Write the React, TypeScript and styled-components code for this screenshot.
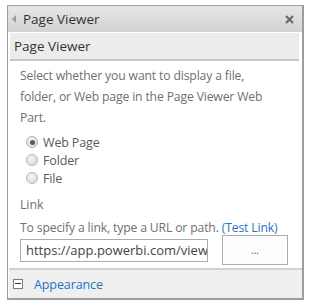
import React from "react";
import styled, { createGlobalStyle } from "styled-components";

const Global = createGlobalStyle`
  html, body { margin: 0; padding: 0; background: #fff; }
  body { font-family: "Open Sans", "Noto Sans", sans-serif; }
`;

const Panel = styled.div`
  margin: 5px 0 0 7px;
  width: 294px;
  height: 292px;
  border: 2px solid #9d9d9d;
  border-top-width: 1px;
  border-left-width: 1px;
  background: #fff;
  display: flex;
  flex-direction: column;
`;

const TitleBar = styled.div`
  height: 26px;
  flex: none;
  display: flex;
  align-items: center;
  padding: 0 8px 0 3px;
  background: linear-gradient(#e6e6e6, #d3d3d3);
  color: #333;
  font-size: 13.5px;
`;

const Arrow = styled.span`
  width: 0;
  height: 0;
  border-top: 4px solid transparent;
  border-bottom: 4px solid transparent;
  border-right: 4px solid #999;
  margin: 0 7px 0 1px;
`;

const Title = styled.span`
  flex: 1;
`;

const Close = styled.svg`
  width: 9px;
  height: 9px;
`;

const Body = styled.div`
  flex: 1;
  display: flex;
  flex-direction: column;
  padding: 1px 3px 0 2px;
`;

const SectionHead = styled.div`
  height: 26px;
  flex: none;
  display: flex;
  align-items: center;
  padding-left: 4px;
  background: #ececec;
  border-bottom: 2px solid #c8c8c8;
  color: #333;
  font-size: 13.5px;
`;

const Content = styled.div`
  flex: 1;
  padding: 4px 0 0 10px;
  color: #707070;
  font-size: 12.2px;
  letter-spacing: -0.15px;
  line-height: 21px;
`;

const Para = styled.p`
  margin: 0;
  width: 262px;
`;

const Radios = styled.div`
  display: flex;
  flex-direction: column;
  padding-left: 6px;
  margin-top: 5px;
`;

const RadioRow = styled.label`
  display: flex;
  align-items: center;
  height: 18px;
  gap: 5px;
  color: #5a5a5a;
  font-size: 12.5px;
`;

const Radio = styled.span<{ $on?: boolean }>`
  width: 10px;
  height: 10px;
  border-radius: 50%;
  border: 1px solid #b4b4b4;
  background: radial-gradient(circle at 40% 35%, #f6f6f6, #d4d4d4);
  display: flex;
  align-items: center;
  justify-content: center;
  &::after {
    content: "";
    display: ${(p) => (p.$on ? "block" : "none")};
    width: 5px;
    height: 5px;
    border-radius: 50%;
    background: #5a5a5a;
  }
`;

const Label = styled.div`
  margin-top: 8px;
  line-height: 20px;
  font-size: 12.5px;
`;

const Hint = styled.div`
  margin-top: 3px;
  line-height: 20px;
`;

const Link = styled.span`
  color: #1f73c4;
`;

const InputRow = styled.div`
  display: flex;
  align-items: center;
  height: 30px;
  margin-top: -3px;
`;

const Input = styled.input`
  box-sizing: content-box;
  width: 181px;
  height: 21px;
  margin: 0;
  border: 1px solid #ababab;
  padding: 0 0 0 5px;
  outline: none;
  color: #444;
  line-height: 21px;
  font-family: "Open Sans", "Noto Sans", sans-serif;
  font-size: 13px;
  letter-spacing: 0;
  background: #fff;
`;

const Button = styled.div`
  margin-left: 14px;
  width: 64px;
  height: 28px;
  border: 1px solid #ababab;
  background: #fdfdfd;
  display: flex;
  align-items: center;
  justify-content: center;
  color: #555;
  font-size: 10px;
  letter-spacing: 0;
`;

const Footer = styled.div`
  height: 28px;
  flex: none;
  margin: 0 -3px 0 -1px;
  border-top: 2px solid #d2d2d2;
  background: #efefef;
  display: flex;
  align-items: center;
  padding-left: 4px;
  font-size: 12.5px;
  letter-spacing: -0.1px;
`;

const Minus = styled.span`
  width: 8px;
  height: 8px;
  border: 1px solid #7a7a7a;
  background: #fff;
  position: relative;
  margin-right: 11px;
  &::after {
    content: "";
    position: absolute;
    left: 1px;
    right: 1px;
    top: 3px;
    height: 1px;
    background: #333;
  }
`;

export default function App() {
  return (
    <>
      <Global />
      <Panel>
        <TitleBar>
          <Arrow />
          <Title>Page Viewer</Title>
          <Close viewBox="0 0 9 9">
            <path d="M1 1 L8 8 M8 1 L1 8" stroke="#6a6a6a" strokeWidth="2.2" />
          </Close>
        </TitleBar>
        <Body>
          <SectionHead>Page Viewer</SectionHead>
          <Content>
            <Para>
              Select whether you want to display a file, folder, or Web page in the Page Viewer Web Part.
            </Para>
            <Radios>
              <RadioRow>
                <Radio $on />
                Web Page
              </RadioRow>
              <RadioRow>
                <Radio />
                Folder
              </RadioRow>
              <RadioRow>
                <Radio />
                File
              </RadioRow>
            </Radios>
            <Label>Link</Label>
            <Hint>
              To specify a link, type a URL or path. <Link>(Test Link)</Link>
            </Hint>
            <InputRow>
              <Input readOnly value="https://app.powerbi.com/view?r=eyJrIjoi" />
              <Button>...</Button>
            </InputRow>
          </Content>
          <Footer>
            <Minus />
            <Link>Appearance</Link>
          </Footer>
        </Body>
      </Panel>
    </>
  );
}
